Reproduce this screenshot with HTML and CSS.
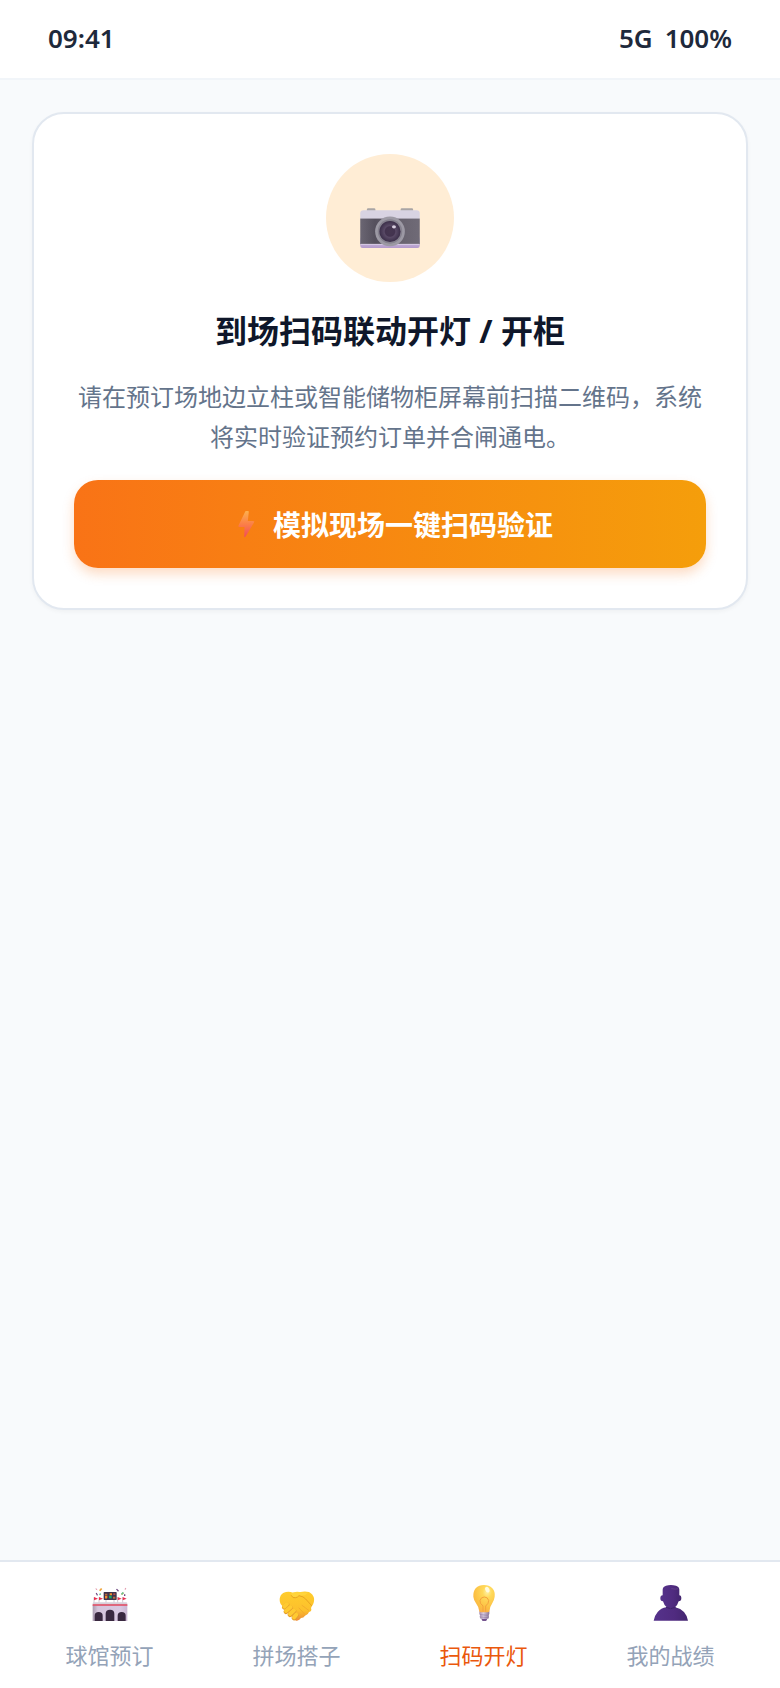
FILE: index.html
```html
<!DOCTYPE html>
<html lang="zh-CN">

<head>
	<meta charset="UTF-8">
	<meta name="viewport" content="width=device-width, initial-scale=1.0">
	<title>扫码开灯</title>
	<link rel="stylesheet" href="styles.css">
</head>

<body>
	<header class="status-bar">
		<span>09:41</span>
		<div class="status-right">
			<span>5G</span>
			<span>100%</span>
		</div>
	</header>

	<main class="content">
		<section class="scan-card">
			<div class="scan-icon">
				<!-- camera -->
				<svg class="camera" viewBox="150 203 180 121" aria-hidden="true">
					<defs>
						<linearGradient id="camBody" x1="0" x2="1">
							<stop offset="0" stop-color="#6b6673" />
							<stop offset=".25" stop-color="#55505d" />
							<stop offset=".7" stop-color="#68636f" />
							<stop offset="1" stop-color="#706b77" />
						</linearGradient>
						<linearGradient id="camBase" x1="0" x2="0" y1="0" y2="1">
							<stop offset="0" stop-color="#dccfe8" />
							<stop offset="1" stop-color="#b39acb" />
						</linearGradient>
						<radialGradient id="camLens">
							<stop offset="0" stop-color="#453650" />
							<stop offset=".45" stop-color="#43334f" />
							<stop offset=".55" stop-color="#594a66" />
							<stop offset="1" stop-color="#3b2e49" />
						</radialGradient>
					</defs>
					<rect x="170" y="204" width="26" height="12" rx="4" fill="#a9a5a5" />
					<rect x="272" y="204" width="38" height="12" rx="4" fill="#a9a5a5" />
					<rect x="150" y="290" width="180" height="34" rx="7" fill="url(#camBase)" />
					<path d="M150 236v-16q0-10 10-10h160q10 0 10 10v16z" fill="#d8d3e2" />
					<rect x="150" y="235" width="180" height="77" fill="url(#camBody)" />
					<path d="M152 313h176" stroke="#d9cce6" stroke-width="3" />
					<circle cx="240" cy="274" r="45" fill="#9c99a4" />
					<circle cx="240" cy="274" r="37" fill="#85818e" />
					<circle cx="240" cy="274" r="32" fill="url(#camLens)" />
					<ellipse cx="252" cy="260" rx="6" ry="5" fill="#d9cfe0" />
				</svg>
			</div>
			<h1 class="scan-title">到场扫码联动开灯 / 开柜</h1>
			<p class="scan-desc">请在预订场地边立柱或智能储物柜屏幕前扫描二维码，系统将实时验证预约订单并合闸通电。</p>
			<button type="button" class="scan-btn">
				<svg class="bolt" viewBox="0 0 36 28" aria-hidden="true">
					<defs>
						<linearGradient id="boltFill" x1="0" x2="0" y1="0" y2="1">
							<stop offset="0" stop-color="#fdb04e" />
							<stop offset=".5" stop-color="#fb7f48" />
							<stop offset="1" stop-color="#f04a5c" />
						</linearGradient>
					</defs>
					<path d="M19 1h2q1 0 .8 1l-1 9H26q2 0 1 1.500L18.500 26.500q-1.500 1.500-1.200-.5L17.500 17H12.500q-1.500 0-1-1.500L18 2q.3-1 1-1z" fill="url(#boltFill)" />
				</svg>
				<span>模拟现场一键扫码验证</span>
			</button>
		</section>
	</main>

	<nav class="tab-bar">
		<a href="#booking" class="tab">
			<!-- stadium -->
			<svg class="tab-icon" viewBox="34 45 108 108" aria-hidden="true">
				<defs>
					<linearGradient id="wall" x1="0" x2="1">
						<stop offset="0" stop-color="#a99bb0" />
						<stop offset=".15" stop-color="#d5c5dc" />
						<stop offset=".8" stop-color="#d9c8e2" />
						<stop offset="1" stop-color="#c9b6d2" />
					</linearGradient>
				</defs>
				<path d="M40 82v18M55 82v18M111 82v18M126 82v18M76 88v12M100 88v12" stroke="#b9afc0" stroke-width="2" />
				<path d="M40 81l12 5-12 5zM55 81l12 5-12 5zM111 81l12 5-12 5zM126 81l12 5-12 5z" fill="#e8304f" />
				<rect x="69" y="66" width="39" height="24" rx="2" fill="#40344c" />
				<path d="M73 71h7v5h-7zM97 80h7v6h-7zM73 81h6v5h-6z" fill="#b56b3c" />
				<path d="M73 77h7v7h-7zM87 70h7v6h-7z" fill="#f28a2b" />
				<path d="M85 77h8v8h-8z" fill="#16a865" />
				<path d="M98 70h6v5h-6z" fill="#b64d48" />
				<path d="M55 61l6-7 4 3-6 7zM121 72l6-5 3 3-6 5z" fill="#f0a43b" />
				<path d="M106 58l3-2 6 6-3 3zM45 70l3-2 4 7-3 2zM130 73h4v5h-4z" fill="#6f4781" />
				<path d="M44 55l5 1 1 5-4-2zM133 53l4 2-3 5-2-1z" fill="#e4a0b1" />
				<path d="M55 72l5-3 1 5-4 2zM121 71l5-5 4 3-6 6z" fill="#64c495" />
				<path d="M36 101q0-4 4-4h96q4 0 4 4v6H36z" fill="#d8d0da" />
				<path d="M36 106h104v47H36z" fill="url(#wall)" />
				<path d="M36 105h104" stroke="#e2445d" stroke-width="4" />
				<path d="M42 153v-16q0-11 12-11t12 11v16zM75 153v-22q0-12 13-12t13 12v22zM111 153v-16q0-11 12-11t12 11v16z" fill="#392840" />
			</svg>
			<span>球馆预订</span>
		</a>
		<a href="#partner" class="tab">
			<!-- handshake -->
			<svg class="tab-icon" viewBox="37 45 108 108" aria-hidden="true">
				<defs>
					<linearGradient id="hand" x1="0" x2="0" y1="0" y2="1">
						<stop offset="0" stop-color="#ffcd2d" />
						<stop offset=".65" stop-color="#fcc02c" />
						<stop offset="1" stop-color="#ee8c38" />
					</linearGradient>
				</defs>
				<path d="M39 90q0-16 12-22 14-6 28 0 11 1 22-2 14-3 26 0 12 6 15 18 2 14-6 24l-3 6q4 9-6 12-2 8-12 11-4 7-12 7-4 6-12 8-8 1-12-7l-28-34q-12-8-12-21z" fill="url(#hand)" />
				<path d="M74 70q10-6 24-4l26 2-9 8-18 2q-5 7-15 4-9-3-8-12z" fill="#ffd43b" />
				<path d="M74 77q4 9 13 6 6-1 10-6 13 2 20 10l18 20" fill="none" stroke="#e8a320" stroke-width="3" stroke-linecap="round" />
				<path d="M106 106l20 15M97 114l16 17" fill="none" stroke="#efa52c" stroke-width="2" stroke-linecap="round" />
				<g stroke-linecap="round">
					<path d="M53 112l8-8M58 125l14-12M70 134l12-11M82 144l7-8" stroke="#e39c2c" stroke-width="14" />
					<path d="M53 110l8-8M58 123l14-12M70 132l12-11M82 142l7-8" stroke="#ffca30" stroke-width="12" />
				</g>
			</svg>
			<span>拼场搭子</span>
		</a>
		<a href="#scan" class="tab active" aria-current="page">
			<!-- light bulb -->
			<svg class="tab-icon" viewBox="34 45 108 108" aria-hidden="true">
				<defs>
					<radialGradient id="bulb" cx=".65" cy=".25" r=".85">
						<stop offset="0" stop-color="#fff2a8" />
						<stop offset=".25" stop-color="#ffd95a" />
						<stop offset=".7" stop-color="#fcc043" />
						<stop offset="1" stop-color="#f7aa4a" />
					</radialGradient>
					<linearGradient id="screw" x1="0" x2="1">
						<stop offset="0" stop-color="#a68caf" />
						<stop offset=".4" stop-color="#d8cbe1" />
						<stop offset="1" stop-color="#8b7598" />
					</linearGradient>
				</defs>
				<path d="M79 145h20l-4 7q-6 3-12 0z" fill="#75558f" />
				<path d="M74 124h30v8l-2 4 1 4-2 6H77l-2-6 1-4-2-4z" fill="url(#screw)" />
				<path d="M76 134l26 2M76 141l26 2" stroke="#8e7a9e" stroke-width="2" />
				<path d="M88 45q15 0 25 10 9 10 7 25-1 10-8 21-7 10-7 20 0 6-5 6H78q-5 0-5-6-1-10-9-21-7-10-8-20-1-15 7-25 10-10 25-10z" fill="url(#bulb)" />
				<path d="M85 125V108q-11-8-9-17 3-10 13-10t13 10q1 9-9 17v17" fill="none" stroke="#f5a13d" stroke-width="3" />
				<ellipse cx="98" cy="59" rx="6" ry="9" fill="#fffbe0" transform="rotate(-25 98 59)" />
			</svg>
			<span>扫码开灯</span>
		</a>
		<a href="#record" class="tab">
			<!-- bust -->
			<svg class="tab-icon" viewBox="37 45 108 108" aria-hidden="true">
				<defs>
					<linearGradient id="bust" x1="0" x2="1">
						<stop offset="0" stop-color="#55328b" />
						<stop offset=".6" stop-color="#502b80" />
						<stop offset="1" stop-color="#43256f" />
					</linearGradient>
				</defs>
				<path d="M66 76V59q0-9 10-12 14-4 30 0 10 3 10 12v17q6 0 6 9t-8 9q-3 13-14 21H81q-11-8-14-21-8 0-8-9t7-9z" fill="url(#bust)" />
				<path d="M39 152q3-16 12-26 10-12 26-14 14 6 27 0 16 3 26 14 9 10 12 26z" fill="url(#bust)" />
				<path d="M76 112q14 8 29 0" fill="none" stroke="#3d2167" stroke-width="3" />
				<path d="M92 56q12 3 21 0" fill="none" stroke="#6d4a91" stroke-width="2" />
			</svg>
			<span>我的战绩</span>
		</a>
	</nav>
</body>

</html>
```

FILE: styles.css
```css
* {
	box-sizing: border-box;
}

body {
	margin: 0;
	min-height: 100vh;
	display: flex;
	flex-direction: column;
	background-color: #f8fafc;
	color: #0f172a;
	font-family: "Noto Sans", "Noto Sans CJK SC", sans-serif;
}

/* top status bar */
.status-bar {
	display: flex;
	justify-content: space-between;
	align-items: center;
	height: 80px;
	padding: 0 48px 2px;
	background-color: #fff;
	border-bottom: 2px solid #f1f5f9;
	color: #1e293b;
	font-size: 26px;
	font-weight: 600;
}

.status-right {
	display: flex;
	gap: 12px;
}

.content {
	flex: 1;
	padding: 32px;
}

.scan-card {
	display: flex;
	flex-direction: column;
	align-items: center;
	padding: 40px;
	background-color: #fff;
	border: 2px solid #e2e8f0;
	border-radius: 32px;
	box-shadow: 0 2px 4px rgba(0, 0, 0, 0.04);
	text-align: center;
}

.scan-icon {
	display: flex;
	justify-content: center;
	align-items: center;
	width: 128px;
	height: 128px;
	padding-top: 20px;
	border-radius: 50%;
	background-color: #ffedd5;
}

.camera {
	width: 60px;
	height: 40px;
}

.scan-title {
	margin: 25px 0 22px;
	font-size: 32px;
	line-height: 48px;
	font-weight: 700;
}

.scan-desc {
	margin: 0 0 23px;
	color: #64748b;
	font-size: 24px;
	line-height: 40px;
}

.scan-btn {
	display: flex;
	justify-content: center;
	align-items: center;
	gap: 10px;
	width: 100%;
	height: 88px;
	border: none;
	border-radius: 24px;
	background: linear-gradient(90deg, #f97316, #f59e0b);
	box-shadow: 0 6px 12px rgba(249, 115, 22, 0.25);
	color: #fff;
	font-family: inherit;
	font-size: 28px;
	font-weight: 700;
	cursor: pointer;
}

.bolt {
	width: 36px;
	height: 28px;
}

/* bottom tabs */
.tab-bar {
	display: flex;
	height: 128px;
	padding: 0 16px;
	background-color: #fff;
	border-top: 2px solid #e2e8f0;
}

.tab {
	flex: 1;
	display: flex;
	flex-direction: column;
	align-items: center;
	gap: 18px;
	padding-top: 23px;
	color: #94a3b8;
	font-size: 22px;
	line-height: 32px;
	text-decoration: none;
}

.tab.active {
	color: #ea580c;
}

.tab-icon {
	width: 36px;
	height: 36px;
}
```
